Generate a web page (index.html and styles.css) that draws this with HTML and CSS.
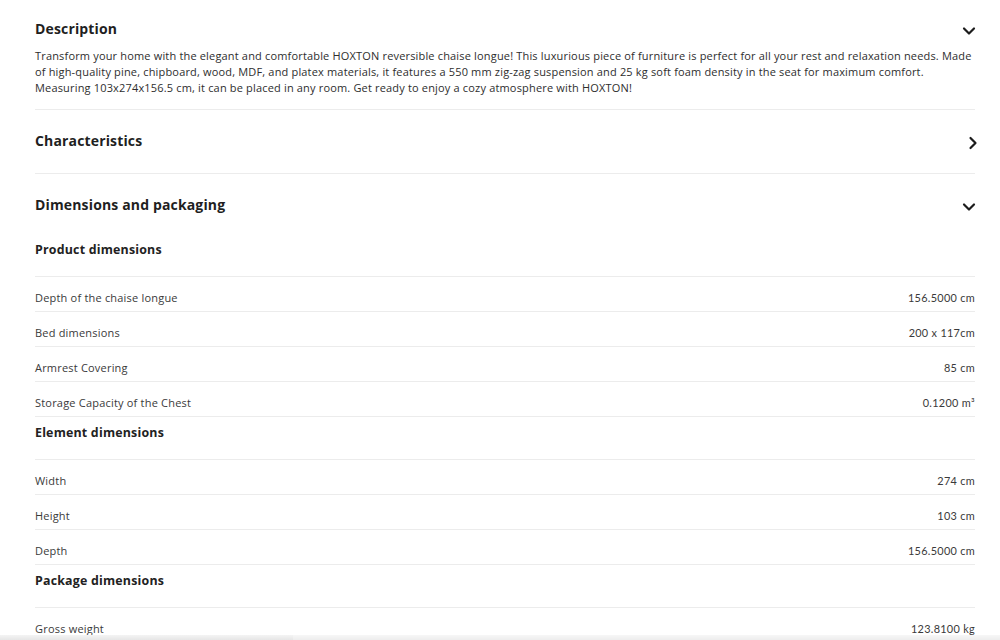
FILE: index.html
```html
<!DOCTYPE html>
<html lang="en">
<head>
<meta charset="utf-8">
<title>HOXTON</title>
<link rel="stylesheet" href="styles.css">
</head>
<body>
<div class="page">
  <section class="acc acc-desc">
    <div class="acc-head head-desc">
      <h2>Description</h2>
      <svg class="chev chev-down" width="14" height="10" viewBox="0 0 14 10"><path d="M2 2.5 L7 7.5 L12 2.5" fill="none" stroke="#1c1c1c" stroke-width="2.2" stroke-linecap="round" stroke-linejoin="round"/></svg>
    </div>
    <p class="desc">Transform your home with the elegant and comfortable HOXTON reversible chaise longue! This luxurious piece of furniture is perfect for all your rest and relaxation needs. Made of high-quality pine, chipboard, wood, MDF, and platex materials, it features a 550 mm zig-zag suspension and 25 kg soft foam density in the seat for maximum comfort. Measuring 103x274x156.5 cm, it can be placed in any room. Get ready to enjoy a cozy atmosphere with HOXTON!</p>
  </section>

  <section class="acc">
    <div class="acc-head">
      <h2>Characteristics</h2>
      <svg class="chev chev-right" width="10" height="14" viewBox="0 0 10 14"><path d="M2.5 2 L7.5 7 L2.5 12" fill="none" stroke="#1c1c1c" stroke-width="2.2" stroke-linecap="round" stroke-linejoin="round"/></svg>
    </div>
  </section>

  <section class="acc acc-open">
    <div class="acc-head head-open">
      <h2>Dimensions and packaging</h2>
      <svg class="chev chev-down" width="14" height="10" viewBox="0 0 14 10"><path d="M2 2.5 L7 7.5 L12 2.5" fill="none" stroke="#1c1c1c" stroke-width="2.2" stroke-linecap="round" stroke-linejoin="round"/></svg>
    </div>

    <h3 class="sub">Product dimensions</h3>
    <div class="row"><span class="label">Depth of the chaise longue</span><span class="value">156.5000 cm</span></div>
    <div class="row"><span class="label">Bed dimensions</span><span class="value">200 x 117cm</span></div>
    <div class="row"><span class="label">Armrest Covering</span><span class="value">85 cm</span></div>
    <div class="row"><span class="label">Storage Capacity of the Chest</span><span class="value">0.1200 m³</span></div>

    <h3 class="sub">Element dimensions</h3>
    <div class="row"><span class="label">Width</span><span class="value">274 cm</span></div>
    <div class="row"><span class="label">Height</span><span class="value">103 cm</span></div>
    <div class="row"><span class="label">Depth</span><span class="value">156.5000 cm</span></div>

    <h3 class="sub">Package dimensions</h3>
    <div class="row"><span class="label">Gross weight</span><span class="value">123.8100 kg</span></div>
  </section>
</div>
<div class="bottom-bar"><div class="bar-left"></div><div class="bar-right"></div></div>
</body>
</html>
```

FILE: styles.css
```css
html, body {
  margin: 0;
  padding: 0;
  background: #fff;
}
body {
  font-family: "Open Sans", "Liberation Sans", sans-serif;
  color: #2a2a2a;
  overflow: hidden;
  height: 640px;
}
.page {
  padding: 0 25px 0 35px;
}
.acc {
  border-bottom: 1px solid #ececec;
}
.acc-open {
  border-bottom: none;
}
.acc-head {
  display: flex;
  justify-content: space-between;
  align-items: center;
  padding: 22px 0 23px;
}
.head-desc {
  padding: 20px 0 0;
}
.head-open {
  padding-bottom: 20px;
}
.acc-head h2 {
  margin: 0;
  font-size: 14px;
  line-height: 18px;
  font-weight: 700;
  color: #1f1f1f;
  letter-spacing: 0.15px;
}
.chev {
  display: block;
  flex: none;
}
.chev-down {
  margin-right: -1px;
  margin-top: 4px;
}
.chev-right {
  margin-right: -3px;
  margin-top: 3px;
}
.desc {
  margin: 10px 0 0;
  padding-bottom: 13px;
  font-size: 11px;
  line-height: 16px;
  letter-spacing: 0.17px;
  color: #2e2e2e;
}
.sub {
  margin: 0;
  padding: 7px 0 17px;
  font-size: 12.4px;
  line-height: 18px;
  font-weight: 700;
  color: #222;
  border-bottom: 1px solid #ececec;
  letter-spacing: 0.2px;
}
.row {
  display: flex;
  justify-content: space-between;
  align-items: baseline;
  height: 34px;
  border-bottom: 1px solid #ececec;
}
.label {
  font-size: 11px;
  line-height: 16px;
  padding-top: 13px;
  letter-spacing: 0.2px;
  color: #3a3a3a;
}
.value {
  font-family: "Lato", "Liberation Sans", sans-serif;
  font-size: 10.9px;
  line-height: 16px;
  color: #3a3a3a;
  letter-spacing: 0.3px;
}
.bottom-bar {
  position: fixed;
  left: 0;
  right: 0;
  bottom: 0;
  height: 5px;
  display: flex;
}
.bar-left {
  width: 293px;
  background: linear-gradient(#f4f4f4, #e6e6e6);
}
.bar-right {
  flex: 1;
  background: linear-gradient(#f7f7f7, #ededed);
}
```
